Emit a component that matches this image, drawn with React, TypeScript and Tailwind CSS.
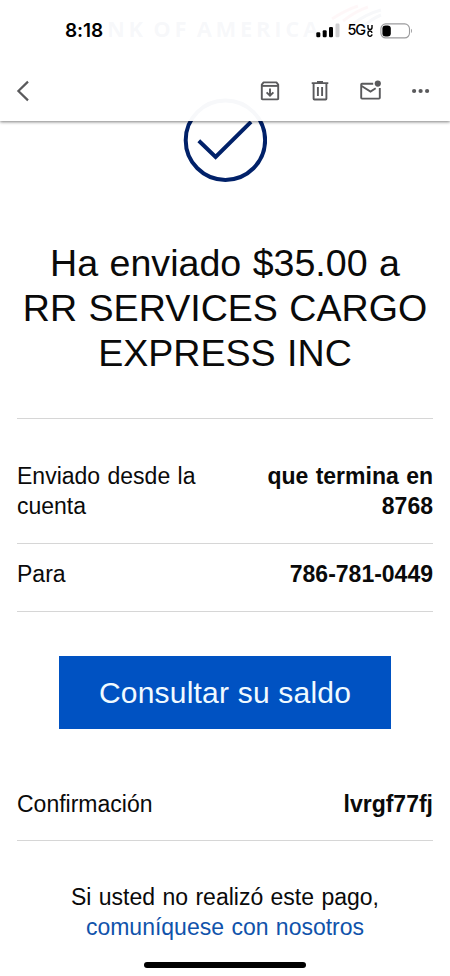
import type { ReactNode } from "react";

type DetailRow = {
  label: string;
  value: string;
  className: string;
};

const details: DetailRow[] = [
  { label: "Enviado desde la cuenta", value: "que termina en 8768", className: "h-[125px] pt-[42px]" },
  { label: "Para", value: "786-781-0449", className: "h-[68px] pt-[15px]" },
];

function StatusBar() {
  return (
    <div className="flex h-[61px] items-center justify-between pr-[37px] pl-[65px] font-[Inter,sans-serif] text-black">
      <span className="text-[19px] leading-none font-semibold tracking-[-0.1px]">8:18</span>
      <div className="flex items-center">
        <svg width="24" height="15" viewBox="0 0 24 15">
          <rect x="0.3" y="9.3" width="4" height="5" rx="1.2" fill="#000" />
          <rect x="6.7" y="7.2" width="4" height="7.1" rx="1.2" fill="#000" />
          <rect x="13" y="4" width="4" height="10.3" rx="1.2" fill="#000" />
          <rect x="19.5" y="0.5" width="4" height="13.8" rx="1.2" fill="#d0d0d2" />
        </svg>
        <span className="ml-[7px] flex items-center text-[14.5px] leading-none font-medium tracking-[-1.1px]">
          5G
          <svg className="ml-[2px]" width="6" height="13" viewBox="0 0 6 13" fill="none" stroke="#000" strokeWidth="1.4">
            <path d="M1 1v2.5a2 2 0 0 0 4 0V1" />
            <path d="M5 8.9a2 2 0 0 0-4 .2v1.1a2 2 0 0 0 4 .2" />
          </svg>
        </span>
        <svg className="ml-[7px]" width="33" height="16" viewBox="0 0 33 16">
          <rect x="0.9" y="0.9" width="28.6" height="14" rx="4.8" fill="#fff" stroke="#9b9b9d" strokeWidth="1.1" />
          <rect x="2.4" y="2.4" width="8.4" height="11" rx="3.2" fill="#000" />
          <path d="M31 5.8v4.2c1.3-.6 1.3-3.6 0-4.2z" fill="#9b9b9d" />
        </svg>
      </div>
    </div>
  );
}

function IconButton({ label, children }: { label: string; children: ReactNode }) {
  return (
    <button aria-label={label} className="flex size-6 items-center justify-center text-[#5a5a5c]">
      {children}
    </button>
  );
}

function Toolbar() {
  return (
    <div className="flex h-[60px] items-center justify-between pr-[18px] pl-[11px]">
      <IconButton label="Atrás">
        <svg width="24" height="24" viewBox="0 0 24 24" fill="none" stroke="currentColor" strokeWidth="2.2">
          <path d="M17 2.6 7.4 12l9.6 9.4" />
        </svg>
      </IconButton>
      <div className="flex items-center gap-[26px]">
        <IconButton label="Archivar">
          <svg width="24" height="24" viewBox="0 0 24 24" fill="none" stroke="currentColor" strokeWidth="1.9">
            <path d="M3.8 5.6 5.6 3.4h12.8l1.8 2.2v14.1a.7.7 0 0 1-.7.7H4.5a.7.7 0 0 1-.7-.7z" strokeLinejoin="round" />
            <path d="M3.8 6.9h16.4" />
            <path d="M12 9.6v7M8.6 13.3l3.4 3.4 3.4-3.4" />
          </svg>
        </IconButton>
        <IconButton label="Eliminar">
          <svg width="24" height="24" viewBox="0 0 24 24" fill="none" stroke="currentColor" strokeWidth="1.9">
            <path d="M3.7 4.1h16.6M9 3h6" />
            <path d="M5.6 4.5v15.2c0 .5.3.8.8.8h11.2c.5 0 .8-.3.8-.8V4.5" />
            <path d="M9.9 8v9M14.1 8v9" />
          </svg>
        </IconButton>
        <IconButton label="Marcar como no leído">
          <svg width="24" height="24" viewBox="0 0 24 24" fill="none" stroke="currentColor" strokeWidth="1.9">
            <path d="M15.2 4.7H4a.8.8 0 0 0-.8.8v13.3c0 .5.3.8.8.8h17c.5 0 .8-.3.8-.8V9" />
            <path d="m3.6 7 8.9 5.6 5.2-3.4" />
            <circle cx="19.8" cy="4.6" r="3.1" fill="currentColor" stroke="none" />
          </svg>
        </IconButton>
        <IconButton label="Más">
          <svg width="24" height="24" viewBox="0 0 24 24" fill="currentColor">
            <circle cx="6.1" cy="12" r="2.1" />
            <circle cx="12.6" cy="12" r="2.1" />
            <circle cx="19.1" cy="12" r="2.1" />
          </svg>
        </IconButton>
      </div>
    </div>
  );
}

function BankLogo() {
  return (
    <div className="flex h-[56px] items-center pl-[107px] text-[#012169]">
      <span className="w-[220px] font-['Open_Sans',sans-serif] text-[22px] leading-none font-bold tracking-[3.7px] whitespace-nowrap [word-spacing:-3px]">
        NK OF AMERICA
      </span>
      <svg className="mb-6 ml-1" width="52" height="26" viewBox="0 0 52 26" fill="none" strokeWidth="3">
        <path d="M1 16C10 10 18 6 27 3M12 18C21 11 28 7 37 4" stroke="#e31837" />
        <path d="M22 21C31 14 39 10 50 7M32 24C38 18 43 15 50 12" stroke="#012169" />
      </svg>
    </div>
  );
}

function Row({ label, value, className }: DetailRow) {
  return (
    <div className={`flex justify-between border-b border-[#d6d6d6] ${className}`}>
      <span className="w-[190px]">{label}</span>
      <span className="w-[180px] text-right font-bold">{value}</span>
    </div>
  );
}

export default function App() {
  return (
    <div className="relative h-[976px] w-[450px] overflow-hidden bg-white font-['Liberation_Sans',Arial,sans-serif] text-[23px] leading-[30px] text-[#0a0a0a] [word-spacing:1px]">
      <header className="absolute inset-x-0 top-0 z-10 h-[121px] bg-white/97 shadow-[0_1px_3px_0_rgba(0,0,0,0.5)]">
        <StatusBar />
        <Toolbar />
      </header>

      <BankLogo />

      <main className="px-[17px]">
        <svg className="mx-auto mt-[42px]" width="84" height="84" viewBox="0 0 84 84" fill="none" stroke="#012169">
          <circle cx="42.4" cy="42.2" r="39.7" strokeWidth="4" />
          <path d="M15.8 42.8 32.6 59 68 23.8" strokeWidth="4" />
        </svg>

        <h1 className="-mx-4 mt-[59px] text-center text-[37.6px] leading-[45px]">
          Ha enviado $35.00 a
          <br />
          RR SERVICES CARGO
          <br />
          EXPRESS INC
        </h1>

        <section className="mt-[42px] border-t border-[#d6d6d6]">
          {details.map((row) => (
            <Row key={row.label} {...row} />
          ))}
        </section>

        <button className="mx-auto mt-[44px] block h-[73px] w-[332px] bg-[#0052c2] text-[30px] tracking-[0.2px] text-[#f0faff]">
          Consultar su saldo
        </button>

        <Row label="Confirmación" value="lvrgf77fj" className="mt-[44px] h-[68px] pt-[16px]" />

        <p className="mt-[41px] text-center">
          Si usted no realizó este pago,
          <br />
          <a className="text-[#1053ab]">comuníquese con nosotros</a>
        </p>
      </main>

      <div className="absolute bottom-[8px] left-1/2 h-[6px] w-[162px] -translate-x-1/2 rounded-full bg-black" />
    </div>
  );
}
